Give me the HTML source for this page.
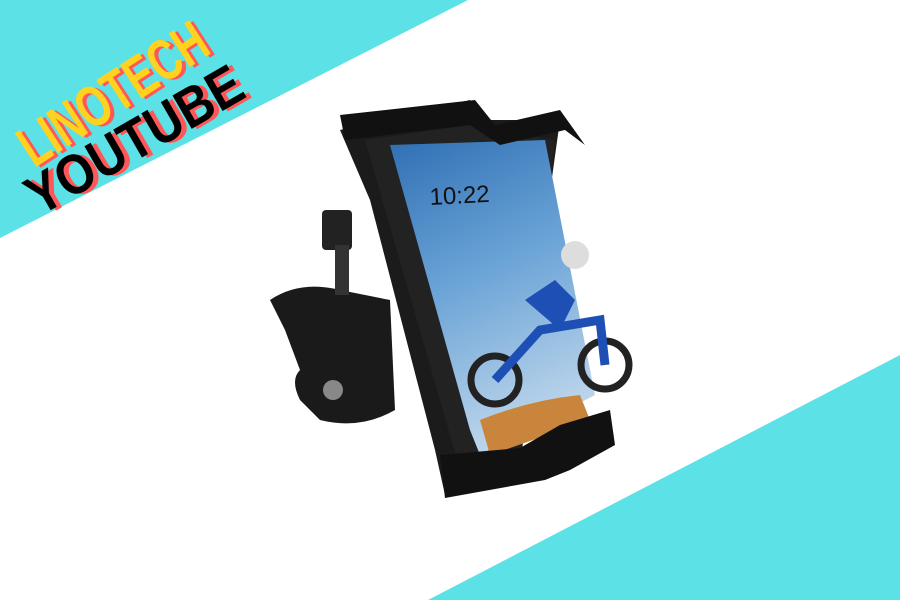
<!DOCTYPE html>
<html><head><style>
body{margin:0;width:900px;height:600px;overflow:hidden;background:#fff;position:relative;font-family:"Liberation Sans",sans-serif}
svg{position:absolute;left:0;top:0}
.t{position:absolute;font-weight:bold;line-height:1;transform-origin:0 0;white-space:nowrap}
</style></head><body>
<svg width="900" height="600">
<defs>
<linearGradient id="sky" x1="0" y1="0" x2="0.3" y2="1">
<stop offset="0" stop-color="#2f6fb4"/><stop offset="0.5" stop-color="#6aa3d6"/><stop offset="1" stop-color="#b9d3ea"/></linearGradient>
</defs>
<polygon points="0,0 468,0 0,238" fill="#5ce1e6"/>
<polygon points="900,355 900,600 428,600" fill="#5ce1e6"/>
<path d="M270,300 Q300,280 340,290 L390,300 L395,410 Q360,430 320,420 L300,400 Q290,380 300,370 L285,330 Z" fill="#1a1a1a"/>
<rect x="322" y="210" width="30" height="40" rx="4" fill="#222"/>
<rect x="335" y="245" width="14" height="50" fill="#333"/>
<circle cx="333" cy="390" r="10" fill="#888"/>
<polygon points="340,130 470,100 490,120 560,120 510,480 445,495 435,450 370,200" fill="#1b1b1b"/>
<polygon points="365,140 470,125 555,140 520,470 460,470" fill="#222"/>
<polygon points="390,145 545,140 595,395 480,455 470,430" fill="url(#sky)"/>
<path d="M480,420 Q530,400 580,395 L590,420 L490,455 Z" fill="#c9853c"/>
<text x="430" y="205" font-size="24" fill="#111" transform="rotate(-3 430 205)">10:22</text>
<circle cx="495" cy="380" r="24" fill="none" stroke="#222" stroke-width="7"/>
<circle cx="605" cy="365" r="24" fill="none" stroke="#222" stroke-width="7"/>
<path d="M495,380 L540,330 L600,320 L605,365" stroke="#1e4fb5" stroke-width="9" fill="none"/>
<path d="M525,300 L555,280 L575,300 L560,330 Z" fill="#1e4fb5"/>
<circle cx="575" cy="255" r="14" fill="#ddd"/>
<polygon points="340,115 475,100 495,125 560,110 585,145 565,130 500,145 470,125 345,140" fill="#111"/>
<polygon points="440,455 520,448 560,425 610,410 615,445 570,470 545,480 445,498" fill="#111"/>
</svg>
<div class="t" style="left:8px;top:128px;font-size:58px;transform:rotate(-33deg) scaleX(0.72);color:#ffd21f;text-shadow:4px 3px 0 #ff5757">LINOTECH</div>
<div class="t" style="left:16px;top:176px;font-size:56px;transform:rotate(-30deg) scaleX(0.88);color:#000;text-shadow:5px 3px 0 #ff5757">YOUTUBE</div>
</body></html>
